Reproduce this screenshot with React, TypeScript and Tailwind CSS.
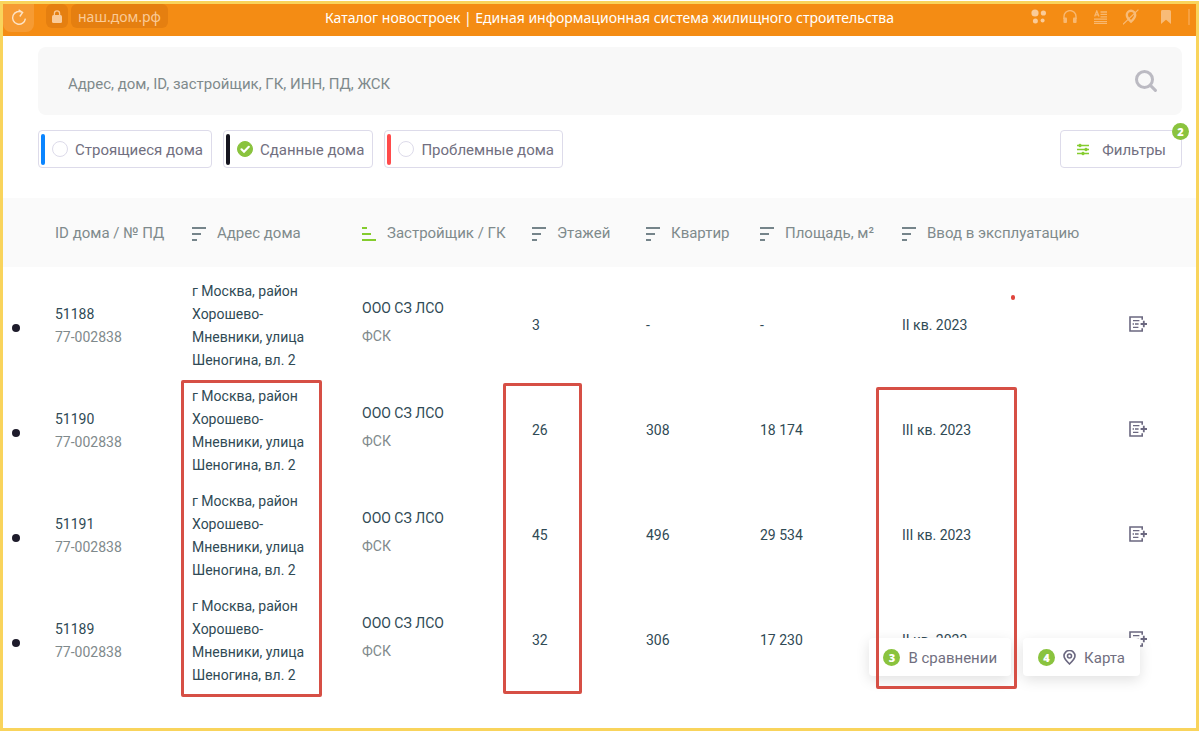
import React from "react";
import clsx from "clsx";

const statuses = [
  { id: "building", label: "Строящиеся дома", bar: "bg-[#0a85ff]", checked: false },
  { id: "done", label: "Сданные дома", bar: "bg-[#15151f]", checked: true },
  { id: "problem", label: "Проблемные дома", bar: "bg-[#ff4b4b]", checked: false },
];

const columns = [
  { title: "ID дома / № ПД", width: "w-[137px]", sort: null },
  { title: "Адрес дома", width: "w-[170px]", sort: "desc" },
  { title: "Застройщик / ГК", width: "w-[170px]", sort: "asc" },
  { title: "Этажей", width: "w-[114px]", sort: "desc" },
  { title: "Квартир", width: "w-[114px]", sort: "desc" },
  { title: "Площадь, м²", width: "w-[142px]", sort: "desc" },
  { title: "Ввод в эксплуатацию", width: "w-[227px]", sort: "desc" },
];

const houses = [
  { id: "51188", floors: "3", flats: "-", area: "-", date: "II кв. 2023" },
  { id: "51190", floors: "26", flats: "308", area: "18 174", date: "III кв. 2023" },
  { id: "51191", floors: "45", flats: "496", area: "29 534", date: "III кв. 2023" },
  { id: "51189", floors: "32", flats: "306", area: "17 230", date: "II кв. 2023" },
];

function SortIcon({ dir }: { dir: string }) {
  return (
    <svg
      width="14"
      height="14"
      viewBox="0 0 14 14"
      strokeWidth="2"
      className={clsx("shrink-0", dir === "asc" ? "stroke-[#84cc2e]" : "stroke-[#75848a]")}
    >
      <path d={dir === "asc" ? "M0 1h5M0 7h9M0 13h14" : "M0 1h14M0 7h9M0 13h5"} />
    </svg>
  );
}

function CompareIcon() {
  return (
    <svg width="18" height="16" viewBox="0 0 18 16" fill="none" stroke="#6b6880" strokeWidth="1.6">
      <path d="M13.2 3.8V1H1v14h12.2v-2.8" />
      <path d="M4 4.600h6.400M4 11.400h5.400" strokeWidth="1.400" />
      <path d="M3.600 8h1.400M6 8h3.600" strokeWidth="1.400" />
      <path d="M11.600 8H18M14.800 4.800v6.400" strokeWidth="1.800" />
    </svg>
  );
}

function Badge({ children }: { children: React.ReactNode }) {
  return (
    <span className="flex size-[17px] items-center justify-center rounded-full bg-[#8ac33e] font-['Open_Sans',sans-serif] text-[11px] font-extrabold leading-none text-white">
      {children}
    </span>
  );
}

function BrowserBar() {
  return (
    <header className="relative flex h-8 items-start bg-[#f48c14] text-[#facb98]">
      <button aria-label="Обновить" className="flex h-7 w-[31px] items-center justify-center rounded-b-lg bg-[#f69b33] text-[#fde3c5]">
        <svg width="16" height="18" viewBox="0 0 16 18" fill="none" stroke="currentColor" strokeWidth="1.4">
          <path d="M14.4 9.6a6.4 6.4 0 1 1-3-6.2M7.6.8l4 2.7-2.8 4" />
        </svg>
      </button>
      <span className="ml-3 flex h-6 w-[22px] items-center justify-center rounded-md bg-[#e57f10]">
        <svg width="10" height="13" viewBox="0 0 10 13">
          <path d="M2.4 6V3.4a2.6 2.6 0 0 1 5.2 0V6" fill="none" stroke="currentColor" strokeWidth="1.3" />
          <rect y="5" width="10" height="8" rx="1.5" fill="currentColor" />
        </svg>
      </span>
      <span className="ml-[3px] flex h-6 items-center rounded-md bg-[#e57f10] px-[7px] pt-0.5 font-['Noto_Sans',sans-serif] text-sm">
        наш.дом.рф
      </span>
      <h1 className="absolute inset-x-0 top-0.5 pl-5 text-center font-['Noto_Sans',sans-serif] text-sm leading-6 text-white">
        Каталог новостроек | Единая информационная система жилищного строительства
      </h1>
      <div className="ml-auto flex h-[26px] items-center">
        <svg width="16" height="16" viewBox="0 0 16 16" fill="currentColor" className="mr-4">
          <circle cx="4" cy="4" r="3.6" />
          <circle cx="12.4" cy="4" r="2.6" />
          <circle cx="4.4" cy="12" r="2.5" />
          <circle cx="11.6" cy="11.4" r="2" />
        </svg>
        <svg width="14" height="14" viewBox="0 0 14 14" className="mr-[17px] opacity-70">
          <path d="M1 9V6.6a6 6 0 0 1 12 0V9" fill="none" stroke="currentColor" strokeWidth="1.4" />
          <rect x="0.4" y="7.6" width="3.6" height="5.4" rx="1" fill="currentColor" />
          <rect x="10" y="7.6" width="3.6" height="5.4" rx="1" fill="currentColor" />
        </svg>
        <svg width="13" height="14" viewBox="0 0 13 14" fill="none" stroke="currentColor" strokeWidth="1.3" className="mr-4 opacity-70">
          <path d="M.6 6.6 2.8 1l2.2 5.6M1.4 4.8h2.8M6.5 2H13M6.5 4.4H13M6.5 6.8H13M0 9.2h13M0 11.6h13M0 13.6h13" />
        </svg>
        <svg width="16" height="16" viewBox="0 0 16 16" fill="none" stroke="currentColor" className="mr-[22px] opacity-75">
          <path d="M8 12.600C5 9.800 3.800 8 3.800 6a4.200 4.200 0 0 1 8.400 0c0 2-1.200 3.800-4.200 6.600Z" strokeWidth="2.400" />
          <path d="M0 15.400 15.400.6" strokeWidth="1.200" />
        </svg>
        <svg width="10" height="14" viewBox="0 0 10 14" fill="currentColor" className="opacity-75">
          <path d="M0 1.500A1.500 1.500 0 0 1 1.500 0h7A1.500 1.500 0 0 1 10 1.500V14L5 9.800 0 14Z" />
        </svg>
        <span className="ml-[17px] mr-1.5 h-4 w-0.5 bg-[#f7a03f]" />
      </div>
    </header>
  );
}

function HouseTable() {
  return (
    <table className="w-full table-fixed border-collapse text-left text-sm text-[#304a55]">
      <thead>
        <tr className="h-[69px] bg-[#fafafa] text-[15px] text-[#7f8a8c]">
          <th className="w-[52px]" aria-label="Статус" />
          {columns.map((col) => (
            <th key={col.title} className={clsx("whitespace-nowrap pt-[3px] font-normal", col.width)}>
              {col.sort ? (
                <button className="flex items-center gap-[11px]">
                  <SortIcon dir={col.sort} />
                  {col.title}
                </button>
              ) : (
                <span className="block">{col.title}</span>
              )}
            </th>
          ))}
          <th aria-label="Сравнение" />
        </tr>
      </thead>
      <tbody>
        {houses.map((house) => (
          <tr key={house.id} className="*:pt-[13px]">
            <td>
              <span className="ml-[9px] mt-1 block size-2 rounded-full bg-[#1d1b2b]" />
            </td>
            <td className="leading-[23px]">
              {house.id}
              <div className="text-[#7f8a8c]">77-002838</div>
            </td>
            <td className="pr-[50px] leading-[23px]">г Москва, район Хорошево-Мневники, улица Шеногина, вл. 2</td>
            <td className="pb-2 leading-7">
              ООО СЗ ЛСО
              <div className="text-[#7f8a8c]">ФСК</div>
            </td>
            <td className="pb-0.5">{house.floors}</td>
            <td className="pb-0.5">{house.flats}</td>
            <td className="pb-0.5">{house.area}</td>
            <td className="pb-0.5">{house.date}</td>
            <td className="pb-1">
              <button aria-label="Добавить к сравнению" className="block">
                <CompareIcon />
              </button>
            </td>
          </tr>
        ))}
      </tbody>
    </table>
  );
}

export default function App() {
  return (
    <div className="relative flex min-h-screen flex-col bg-white pr-px pt-px font-[Roboto,sans-serif]">
      <div className="flex-1 border-[3px] border-[#f9d45c]">
        <BrowserBar />

        <main>
          <div className="pl-[35px] pr-3.5 pt-[11px]">
            <form className="flex h-[68px] items-center rounded-lg bg-[#f8f8f8] pl-[30px] pr-[25px]">
              <input
                type="text"
                aria-label="Поиск"
                placeholder="Адрес, дом, ID, застройщик, ГК, ИНН, ПД, ЖСК"
                className="flex-1 pt-1.5 text-[15px] outline-none placeholder:text-[#7f8a8c]"
              />
              <button type="button" aria-label="Найти">
                <svg width="22" height="22" viewBox="0 0 22 22" fill="none" stroke="#bbbac2" strokeWidth="3" strokeLinecap="round">
                  <circle cx="9.500" cy="9.500" r="8" />
                  <path d="m15.400 15.400 5 5" />
                </svg>
              </button>
            </form>

            <div className="mt-[15px] flex h-[38px] gap-[11px] text-[15px] text-[#716f80]">
              {statuses.map((s) => (
                <label key={s.id} className="flex items-center rounded border border-[#dddbea] pl-0.5 pr-2">
                  <span className={clsx("h-[31px] w-1 rounded-sm", s.bar)} />
                  <span className="mx-[7px] grid size-4 *:col-start-1 *:row-start-1">
                    <input
                      type="checkbox"
                      defaultChecked={s.checked}
                      className="peer size-4 appearance-none rounded-full border border-[#dddbea] checked:border-[#8ac33e] checked:bg-[#8ac33e]"
                    />
                    <svg viewBox="0 0 16 16" className="pointer-events-none hidden size-4 peer-checked:block" fill="none" stroke="white" strokeWidth="2.2" strokeLinecap="round">
                      <path d="m4.500 8.300 2.500 2.400 4.800-4.900" />
                    </svg>
                  </span>
                  <span className="pt-0.5">{s.label}</span>
                </label>
              ))}
              <button className="relative ml-auto flex items-center gap-[13px] rounded border border-[#dddbea] pl-4 pr-[15px]">
                <svg width="12" height="13" viewBox="0 0 12 13" className="fill-[#84cc2e] stroke-[#84cc2e]">
                  <path d="M0 2.500h12M0 6.500h12M0 10.500h12" strokeWidth="1.400" />
                  <circle cx="3" cy="2.500" r="1.300" />
                  <circle cx="9" cy="6.500" r="1.300" />
                  <circle cx="6" cy="10.500" r="1.300" />
                </svg>
                <span className="pt-0.5">Фильтры</span>
                <span className="absolute -right-2 -top-2">
                  <Badge>2</Badge>
                </span>
              </button>
            </div>
          </div>

          <div className="mt-[30px]">
            <HouseTable />
          </div>
        </main>
      </div>

      {/* Floating actions */}
      <div className="absolute bottom-[55px] right-[60px] flex h-[38px] gap-3 text-[15px] text-[#716f80]">
        <button className="flex items-center gap-2 rounded bg-white px-3.5 shadow-[0_4px_14px_rgba(0,0,0,0.12)]">
          <Badge>3</Badge>
          <span className="pt-0.5">В сравнении</span>
        </button>
        <button className="flex items-center gap-2 rounded bg-white px-[15px] shadow-[0_4px_14px_rgba(0,0,0,0.12)]">
          <Badge>4</Badge>
          <svg width="13" height="15" viewBox="0 0 13 15" fill="none" stroke="#6b6880" strokeWidth="1.600">
            <path d="M6.500 14C3 10.600 1 8.400 1 6a5.500 5.500 0 0 1 11 0c0 2.400-2 4.600-5.500 8Z" />
            <circle cx="6.500" cy="6" r="2" />
          </svg>
          <span className="pt-0.5">Карта</span>
        </button>
      </div>

      {/* Highlight marks */}
      <div className="pointer-events-none absolute left-[181px] top-[380px] h-[317px] w-[141px] rounded-xs border-[3px] border-[#d64f45]" />
      <div className="pointer-events-none absolute left-[503px] top-[383px] h-[311px] w-[79px] rounded-xs border-[3px] border-[#d64f45]" />
      <div className="pointer-events-none absolute left-[876px] top-[387px] h-[302px] w-[141px] rounded-xs border-[3px] border-[#d64f45]" />
      <div className="pointer-events-none absolute left-[1011px] top-[295px] h-[5px] w-1 rounded-sm bg-[#e0453c]" />
    </div>
  );
}
